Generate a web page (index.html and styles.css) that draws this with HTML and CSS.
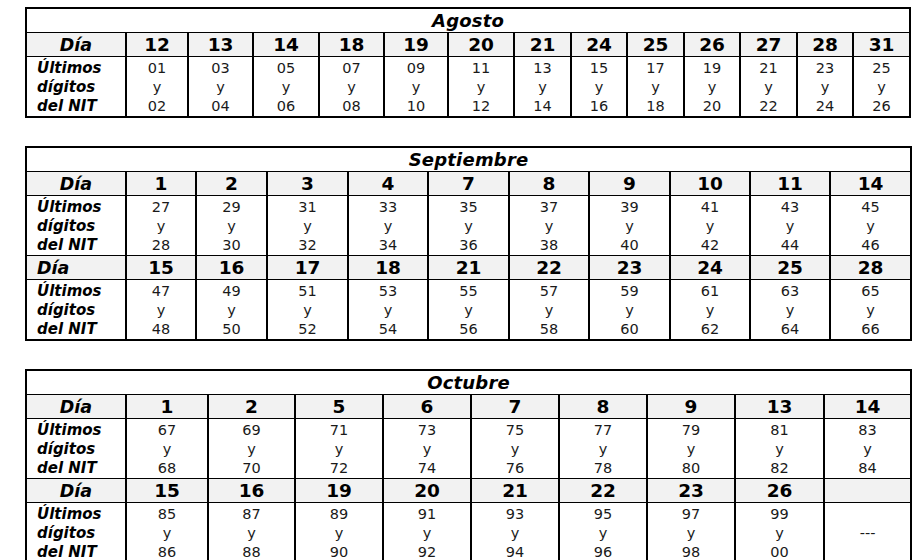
FILE: index.html
```html
<!DOCTYPE html>
<html lang="es">
<head>
<meta charset="utf-8">
<title>Calendario NIT</title>
<link rel="stylesheet" href="styles.css">
</head>
<body>
<div class="page">

<table class="cal">
  <colgroup>
    <col class="c-label">
    <col style="width:62px"><col style="width:65px"><col style="width:66px"><col style="width:65px"><col style="width:64px"><col style="width:66px">
    <col style="width:57px"><col style="width:56px"><col style="width:57px"><col style="width:56px"><col style="width:57px"><col style="width:56px"><col style="width:57px">
  </colgroup>
  <tr class="title"><td colspan="14">Agosto</td></tr>
  <tr class="day">
    <td class="lbl-day">Día</td>
    <td>12</td><td>13</td><td>14</td><td>18</td><td>19</td><td>20</td><td>21</td><td>24</td><td>25</td><td>26</td><td>27</td><td>28</td><td>31</td>
  </tr>
  <tr class="data">
    <td class="lbl">Últimos<br>dígitos<br>del NIT</td>
    <td>01<br>y<br>02</td><td>03<br>y<br>04</td><td>05<br>y<br>06</td><td>07<br>y<br>08</td><td>09<br>y<br>10</td><td>11<br>y<br>12</td><td>13<br>y<br>14</td><td>15<br>y<br>16</td><td>17<br>y<br>18</td><td>19<br>y<br>20</td><td>21<br>y<br>22</td><td>23<br>y<br>24</td><td>25<br>y<br>26</td>
  </tr>
</table>

<table class="cal">
  <colgroup>
    <col class="c-label">
    <col style="width:70px"><col style="width:71px"><col style="width:81px"><col style="width:80px"><col style="width:81px"><col style="width:80px"><col style="width:81px"><col style="width:80px"><col style="width:80px"><col style="width:81px">
  </colgroup>
  <tr class="title"><td colspan="11">Septiembre</td></tr>
  <tr class="day">
    <td class="lbl-day">Día</td>
    <td>1</td><td>2</td><td>3</td><td>4</td><td>7</td><td>8</td><td>9</td><td>10</td><td>11</td><td>14</td>
  </tr>
  <tr class="data">
    <td class="lbl">Últimos<br>dígitos<br>del NIT</td>
    <td>27<br>y<br>28</td><td>29<br>y<br>30</td><td>31<br>y<br>32</td><td>33<br>y<br>34</td><td>35<br>y<br>36</td><td>37<br>y<br>38</td><td>39<br>y<br>40</td><td>41<br>y<br>42</td><td>43<br>y<br>44</td><td>45<br>y<br>46</td>
  </tr>
  <tr class="day">
    <td class="lbl-day left">Día</td>
    <td>15</td><td>16</td><td>17</td><td>18</td><td>21</td><td>22</td><td>23</td><td>24</td><td>25</td><td>28</td>
  </tr>
  <tr class="data">
    <td class="lbl">Últimos<br>dígitos<br>del NIT</td>
    <td>47<br>y<br>48</td><td>49<br>y<br>50</td><td>51<br>y<br>52</td><td>53<br>y<br>54</td><td>55<br>y<br>56</td><td>57<br>y<br>58</td><td>59<br>y<br>60</td><td>61<br>y<br>62</td><td>63<br>y<br>64</td><td>65<br>y<br>66</td>
  </tr>
</table>

<table class="cal">
  <colgroup>
    <col class="c-label">
    <col style="width:82px"><col style="width:87px"><col style="width:88px"><col style="width:88px"><col style="width:88px"><col style="width:88px"><col style="width:88px"><col style="width:89px"><col style="width:87px">
  </colgroup>
  <tr class="title"><td colspan="10">Octubre</td></tr>
  <tr class="day">
    <td class="lbl-day">Día</td>
    <td>1</td><td>2</td><td>5</td><td>6</td><td>7</td><td>8</td><td>9</td><td>13</td><td>14</td>
  </tr>
  <tr class="data">
    <td class="lbl">Últimos<br>dígitos<br>del NIT</td>
    <td>67<br>y<br>68</td><td>69<br>y<br>70</td><td>71<br>y<br>72</td><td>73<br>y<br>74</td><td>75<br>y<br>76</td><td>77<br>y<br>78</td><td>79<br>y<br>80</td><td>81<br>y<br>82</td><td>83<br>y<br>84</td>
  </tr>
  <tr class="day">
    <td class="lbl-day">Día</td>
    <td>15</td><td>16</td><td>19</td><td>20</td><td>21</td><td>22</td><td>23</td><td>26</td><td></td>
  </tr>
  <tr class="data">
    <td class="lbl">Últimos<br>dígitos<br>del NIT</td>
    <td>85<br>y<br>86</td><td>87<br>y<br>88</td><td>89<br>y<br>90</td><td>91<br>y<br>92</td><td>93<br>y<br>94</td><td>95<br>y<br>96</td><td>97<br>y<br>98</td><td>99<br>y<br>00</td><td class="dash">---</td>
  </tr>
</table>

</div>
</body>
</html>
```

FILE: styles.css
```css
html, body {
  margin: 0;
  padding: 0;
  background: #ffffff;
}

body {
  font-family: "DejaVu Sans", "Liberation Sans", sans-serif;
  color: #111111;
}

.page {
  display: flex;
  flex-direction: column;
  gap: 28px;
  padding: 7px 0 0 25px;
}

.cal {
  width: 885px;
  table-layout: fixed;
  border-collapse: collapse;
  border: 2px solid #000;
}

.c-label {
  width: 100px;
}

.cal td {
  border: 2px solid #000;
  padding: 0;
  text-align: center;
  vertical-align: middle;
}

.title td {
  height: 23px;
  font-weight: bold;
  font-style: italic;
  font-size: 18px;
  color: #000;
  border-top-width: 1px;
  border-bottom-width: 1px;
  letter-spacing: 0.2px;
}

.day td {
  height: 23px;
  background: #f2f2f2;
  font-weight: bold;
  font-size: 18.5px;
  color: #000;
  border-top-width: 1px;
  border-bottom-width: 1px;
}

.day .lbl-day {
  font-style: italic;
  font-size: 17.5px;
}

.day .lbl-day.left {
  text-align: left;
  padding-left: 10px;
}

.data td {
  height: 58px;
  padding-top: 1px;
  font-size: 14.5px;
  line-height: 19px;
  color: #1a1a1a;
  border-top-width: 1px;
  border-bottom-width: 1px;
}

.data .lbl {
  text-align: left;
  padding-left: 10px;
  font-weight: bold;
  font-style: italic;
  font-size: 15px;
  color: #000;
}

.data .dash {
  vertical-align: middle;
}
```
